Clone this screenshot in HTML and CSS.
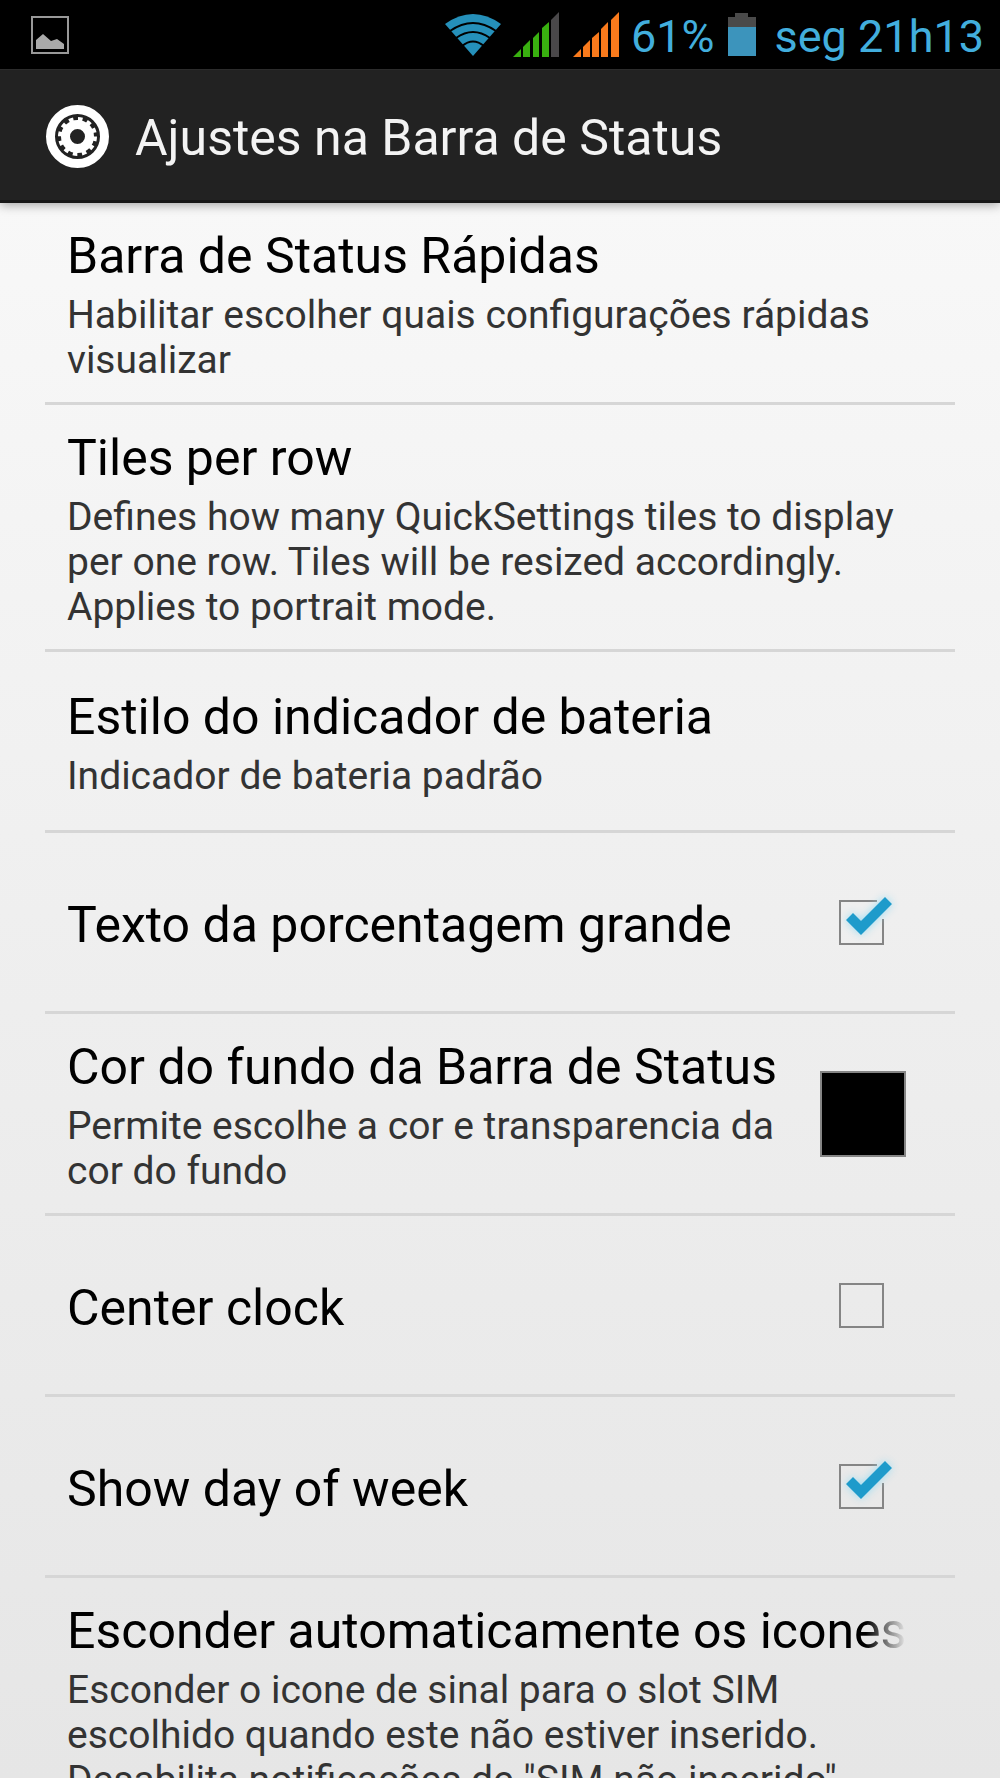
FILE: index.html
```html
<!DOCTYPE html>
<html lang="pt-BR">
<head>
<meta charset="utf-8">
<meta name="viewport" content="width=device-width, initial-scale=1">
<title>Ajustes na Barra de Status</title>
<link rel="stylesheet" href="styles.css">
</head>
<body>
<div class="status-bar">
  <svg class="picture-icon" width="38" height="38" viewBox="0 0 38 38" aria-hidden="true">
    <rect x="1" y="1" width="36" height="36" fill="none" stroke="#999" stroke-width="2"/>
    <path d="M5 33V24L12 18L20 25L26 23L33 28V33Z" fill="#aaa"/>
  </svg>
  <div class="indicators">
    <svg class="wifi" width="56" height="42" viewBox="0 0 56 42" aria-hidden="true">
      <path d="M0 10Q28-10 56 10L28 42Z" fill="#2590ba"/>
      <g fill="none" stroke="#000" stroke-width="2">
        <path d="M5 17Q28 1 51 17"/>
        <path d="M11 24Q28 12 45 24"/>
        <path d="M17 32Q28 23 39 32"/>
      </g>
    </svg>
    <svg class="signal" width="46" height="46" viewBox="0 0 46 46" aria-hidden="true">
      <g fill="#39b010">
        <path d="M0 45L8 37V45Z"/><path d="M10 35L17 28V45H10Z"/><path d="M20 26L26 20V45H20Z"/><path d="M29 16L36 10V45H29Z"/>
      </g>
      <path d="M38 8L46 0V45H38Z" fill="#4a484a"/>
    </svg>
    <svg class="signal-two" width="46" height="46" viewBox="0 0 46 46" aria-hidden="true">
      <g fill="#f97a1c">
        <path d="M0 45L8 37V45Z"/><path d="M10 35L17 28V45H10Z"/><path d="M19 26L26 20V45H19Z"/><path d="M28 17L35 10V45H28Z"/><path d="M38 8L46 0V45H38Z"/>
      </g>
    </svg>
    <span class="percent">61%</span>
    <svg class="battery" width="28" height="43" viewBox="0 0 28 43" aria-hidden="true">
      <path d="M0 4H7V0H20V4H28V15H0Z" fill="#4a4a4a"/>
      <path d="M0 14H28V43H0Z" fill="#3c94bc"/>
    </svg>
    <span class="clock">seg 21h13</span>
  </div>
</div>
<header class="action-bar">
  <svg width="63" height="63" viewBox="0 0 63 63" aria-hidden="true">
    <circle cx="31.500" cy="31.500" r="27" fill="none" stroke="#fff" stroke-width="9"/>
    <circle cx="31.500" cy="31.500" r="12" fill="none" stroke="#fff" stroke-width="9"/>
    <circle cx="31.500" cy="31.500" r="17.500" fill="none" stroke="#fff" stroke-width="4" stroke-dasharray="4.500 4.663"/>
  </svg>
  <h1>Ajustes na Barra de Status</h1>
</header>
<main class="settings">
  <section class="row">
    <div class="text"><h2>Barra de Status Rápidas</h2><p>Habilitar escolher quais configurações rápidas visualizar</p></div>
  </section>
  <section class="row">
    <div class="text"><h2>Tiles per row</h2><p>Defines how many QuickSettings tiles to display per one row. Tiles will be resized accordingly. Applies to portrait mode.</p></div>
  </section>
  <section class="row">
    <div class="text"><h2>Estilo do indicador de bateria</h2><p>Indicador de bateria padrão</p></div>
  </section>
  <section class="row">
    <label class="text title" for="percent-text">Texto da porcentagem grande</label>
    <span class="check">
      <input type="checkbox" id="percent-text" checked>
      <svg class="tick" width="60" height="60" viewBox="0 0 60 60" aria-hidden="true">
        <path d="M38 9H1V52H44V27" fill="none" stroke="#858585" stroke-width="2"/>
        <path class="mark" d="M7 28L14 21L22 29L46 5L53 12L22 43Z" fill="#1e9bcb"/>
      </svg>
    </span>
  </section>
  <section class="row">
    <div class="text"><h2>Cor do fundo da Barra de Status</h2><p>Permite escolhe a cor e transparencia da cor do fundo</p></div>
    <button class="swatch" type="button" aria-label="Cor do fundo da Barra de Status"></button>
  </section>
  <section class="row">
    <label class="text title" for="center-clock">Center clock</label>
    <span class="check"><input type="checkbox" id="center-clock"></span>
  </section>
  <section class="row">
    <label class="text title" for="week-day">Show day of week</label>
    <span class="check">
      <input type="checkbox" id="week-day" checked>
      <svg class="tick" width="60" height="60" viewBox="0 0 60 60" aria-hidden="true">
        <path d="M38 9H1V52H44V27" fill="none" stroke="#858585" stroke-width="2"/>
        <path class="mark" d="M7 28L14 21L22 29L46 5L53 12L22 43Z" fill="#1e9bcb"/>
      </svg>
    </span>
  </section>
  <section class="row">
    <div class="text"><h2 class="fade">Esconder automaticamente os icones</h2><p>Esconder o icone de sinal para o slot SIM escolhido quando este não estiver inserido. Desabilita notificações de "SIM não inserido"</p></div>
  </section>
</main>
</body>
</html>
```
FILE: styles.css
```css
* { box-sizing: border-box; }
body {
  margin: 0;
  height: 100vh;
  overflow: hidden;
  display: flex;
  flex-direction: column;
  font-family: Roboto, "Noto Sans", sans-serif;
  color: #000;
  background: #eee;
}
h1, h2, p { margin: 0; font-weight: 400; }
svg { display: block; flex: none; }
.status-bar {
  flex: none;
  display: flex;
  justify-content: space-between;
  align-items: center;
  height: 69px;
  padding: 0 16px 0 31px;
  background: #000;
}
.indicators {
  display: flex;
  align-items: center;
  color: #42aedd;
  font-size: 45px;
  line-height: 65px;
}
.percent, .clock { padding-top: 4px; }
.wifi { margin-right: 12px; }
.signal { margin-right: 14px; }
.signal-two { margin-right: 12px; }
.battery { margin: 0 19px 0 13px; }
.action-bar {
  flex: none;
  display: flex;
  align-items: center;
  gap: 26px;
  height: 134px;
  padding: 2px 46px 0;
  color: #f3f3f3;
  background: #222;
  border-top: 1px solid #2c2c2c;
  border-bottom: 3px solid #171717;
  box-shadow: 0 2px 10px rgba(0, 0, 0, 0.35);
  position: relative;
}
h1 { padding-top: 4px; font-size: 50px; line-height: 60px; }
.settings {
  flex: 1;
  min-height: 0;
  overflow: hidden;
  padding: 0 45px;
  background: linear-gradient(#f8f8f8, #efefef 45%, #e6e6e6);
}
.row {
  display: flex;
  align-items: center;
  min-height: 181px;
  padding: 17px 49px 17px 22px;
  border-bottom: 3px solid #d6d6d6;
}
.text { flex: 1; min-width: 0; }
h2, .title { padding-top: 6px; font-size: 50px; line-height: 60px; white-space: nowrap; }
h2 { padding-bottom: 7px; }
.fade {
  overflow: hidden;
  -webkit-mask-image: linear-gradient(to left, transparent, #000 40px);
  mask-image: linear-gradient(to left, transparent, #000 40px);
}
p { padding-bottom: 2px; color: #333; font-size: 39px; line-height: 45px; }
.check { position: relative; width: 44px; height: 44px; margin-right: 23px; }
.check input {
  appearance: none;
  display: block;
  width: 45px;
  height: 45px;
  margin: 0;
  border: 2px solid #858585;
}
.check input:checked { border-color: transparent; }
.tick {
  position: absolute;
  left: 0;
  bottom: -8px;
  overflow: visible;
}
.mark { filter: drop-shadow(0 0 4px #9bdcf2); }
.swatch {
  flex: none;
  width: 86px;
  height: 86px;
  margin-left: 32px;
  padding: 0;
  background: #000;
  border: 2px solid #858585;
}
```
